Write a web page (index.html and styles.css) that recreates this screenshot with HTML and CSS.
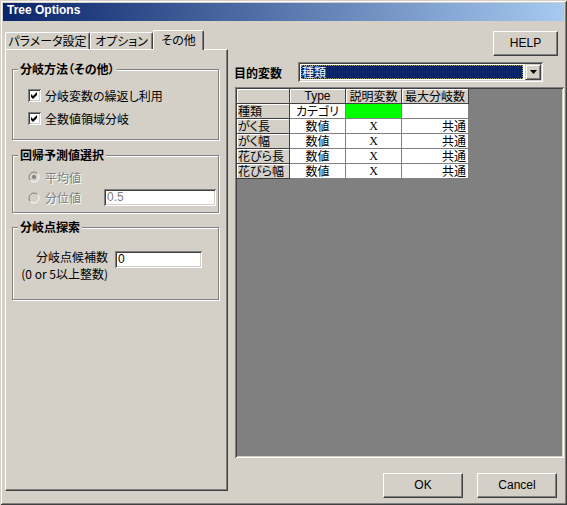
FILE: index.html
```html
<!DOCTYPE html>
<html lang="ja">
<head>
<meta charset="utf-8">
<title>Tree Options</title>
<link rel="stylesheet" href="styles.css">
</head>
<body>
<div class="window">
  <div class="titlebar">Tree Options</div>
  <div class="client">
    <div class="leftcol">
      <div class="tabs">
        <div class="tab t1">パラメータ設定</div>
        <div class="tab t2">オプション</div>
        <div class="tab sel">その他</div>
      </div>
      <div class="panel">
        <div class="group g1">
          <div class="gtitle">分岐方法（その他）</div>
          <div class="check r1">
            <span class="cbox"><svg width="9" height="9" viewBox="0 0 9 9"><path d="M1 3 L3 5 L7 1 L7 4 L3 8 L1 6 Z" fill="#000"/></svg></span>
            <span>分岐変数の繰返し利用</span>
          </div>
          <div class="check r2">
            <span class="cbox"><svg width="9" height="9" viewBox="0 0 9 9"><path d="M1 3 L3 5 L7 1 L7 4 L3 8 L1 6 Z" fill="#000"/></svg></span>
            <span>全数値領域分岐</span>
          </div>
        </div>
        <div class="group g2">
          <div class="gtitle">回帰予測値選択</div>
          <div class="radio r1">
            <svg class="rbtn" width="12" height="12" viewBox="0 0 12 12"><circle cx="6" cy="6" r="5" fill="#d4d0c8"/><path d="M2.46 9.54 A5 5 0 0 1 9.54 2.46" stroke="#808080" fill="none"/><path d="M9.54 2.46 A5 5 0 0 1 2.46 9.54" stroke="#ffffff" fill="none"/><circle cx="6" cy="6" r="2" fill="#808080"/></svg>
            <span class="dis">平均値</span>
          </div>
          <div class="radio r2">
            <svg class="rbtn" width="12" height="12" viewBox="0 0 12 12"><circle cx="6" cy="6" r="5" fill="#d4d0c8"/><path d="M2.46 9.54 A5 5 0 0 1 9.54 2.46" stroke="#808080" fill="none"/><path d="M9.54 2.46 A5 5 0 0 1 2.46 9.54" stroke="#ffffff" fill="none"/></svg>
            <span class="dis rlabel">分位値</span>
            <div class="edit quant">0.5</div>
          </div>
        </div>
        <div class="group g3">
          <div class="gtitle">分岐点探索</div>
          <div class="search">
            <div class="slabel">分岐点候補数<br>(0 or 5以上整数)</div>
            <div class="edit cand">0</div>
          </div>
        </div>
      </div>
    </div>
    <div class="rightcol">
      <div class="helprow"><div class="btn help">HELP</div></div>
      <div class="target">
        <div class="tlabel">目的変数</div>
        <div class="combo">
          <div class="csel"><span class="ctext">種類</span></div>
          <div class="cdrop"><svg width="7" height="4" viewBox="0 0 7 4"><path d="M0 0 H7 L3.5 4 Z" fill="#000"/></svg></div>
        </div>
      </div>
      <div class="gridarea">
        <table class="vars">
          <colgroup><col class="c0"><col class="c1"><col class="c2"><col class="c3"></colgroup>
          <tr><th class="hd"></th><th class="hd lat">Type</th><th class="hd">説明変数</th><th class="hd">最大分岐数</th></tr>
          <tr><th class="rh">種類</th><td class="ctr">カテゴリ</td><td class="green"></td><td></td></tr>
          <tr><th class="rh">がく長</th><td class="ctr">数値</td><td class="ctr x">X</td><td class="rt">共通</td></tr>
          <tr><th class="rh">がく幅</th><td class="ctr">数値</td><td class="ctr x">X</td><td class="rt">共通</td></tr>
          <tr><th class="rh">花びら長</th><td class="ctr">数値</td><td class="ctr x">X</td><td class="rt">共通</td></tr>
          <tr><th class="rh">花びら幅</th><td class="ctr">数値</td><td class="ctr x">X</td><td class="rt">共通</td></tr>
        </table>
      </div>
      <div class="btnrow">
        <div class="btn ok">OK</div>
        <div class="btn cancel">Cancel</div>
      </div>
    </div>
  </div>
</div>
</body>
</html>
```

FILE: styles.css
```css
* { box-sizing: border-box; }
body {
  margin: 0;
  font-family: "Noto Sans CJK JP", sans-serif;
  font-size: 12px;
  font-feature-settings: "palt";
  color: #000;
}
.window {
  width: 567px;
  height: 505px;
  background: #d4d0c8;
  padding: 3px;
  display: flex;
  flex-direction: column;
  box-shadow: inset 1px 1px 0 #d4d0c8, inset -1px -1px 0 #404040, inset 2px 2px 0 #ffffff, inset -2px -2px 0 #808080;
}
.titlebar {
  flex: none;
  height: 18px;
  line-height: 18px;
  padding-left: 4px;
  color: #fff;
  font: bold 12px "Liberation Sans", sans-serif;
  background: linear-gradient(90deg, #0a246a, #a6caf0);
}
.client { display: flex; flex: 1; }
.leftcol { margin: 9px 0 0 2px; width: 223px; flex: none; }
.tabs { display: flex; align-items: flex-end; height: 19px; }
.tab {
  height: 17px;
  line-height: 15px;
  text-align: center;
  border-top: 1px solid #fff;
  border-left: 1px solid #fff;
  border-right: 1px solid #404040;
  border-radius: 2px 2px 0 0;
  box-shadow: inset -1px 0 0 #808080;
  background: #d4d0c8;
}
.t1 { width: 85px; }
.t2 { width: 63px; }
.sel {
  width: 51px;
  height: 20px;
  line-height: 17px;
  margin-bottom: -1px;
  position: relative;
  z-index: 1;
}
.panel {
  height: 442px;
  border: 1px solid;
  border-color: #fff #404040 #404040 #fff;
  box-shadow: inset -1px -1px 0 #808080;
  padding: 19px 0 0 6px;
}
.group {
  width: 207px;
  border: 1px solid #808080;
  box-shadow: 1px 1px 0 #fff, inset 1px 1px 0 #fff;
}
.gtitle {
  width: max-content;
  margin: -8px 0 0 5px;
  padding: 0 2px;
  line-height: 14px;
  height: 14px;
  font-weight: bold;
  background: #d4d0c8;
}
.g1 { height: 71px; }
.g2 { height: 58px; margin-top: 15px; }
.g3 { height: 73px; margin-top: 14px; }
.check { display: flex; align-items: center; height: 16px; gap: 4px; margin-left: 15px; }
.check.r1 { margin-top: 11px; }
.check.r2 { margin-top: 7px; }
.cbox {
  width: 13px;
  height: 13px;
  background: #fff;
  display: flex;
  align-items: center;
  justify-content: center;
  box-shadow: inset 1px 1px 0 #808080, inset -1px -1px 0 #fff, inset 2px 2px 0 #404040, inset -2px -2px 0 #d4d0c8;
}
.radio { display: flex; align-items: center; gap: 5px; margin-left: 15px; }
.radio.r1 { margin-top: 7px; height: 16px; }
.radio.r2 { margin-top: 4px; height: 17px; }
.rbtn { flex: none; }
.dis { color: #808080; text-shadow: 1px 1px 0 #fff; }
.rlabel { width: 54px; }
.edit {
  height: 17px;
  line-height: 13px;
  padding: 2px 3px;
  background: #fff;
  font-family: "Liberation Sans", sans-serif;
  font-size: 12px;
  box-shadow: inset 1px 1px 0 #808080, inset -1px -1px 0 #fff, inset 2px 2px 0 #404040, inset -2px -2px 0 #d4d0c8;
}
.quant { width: 112px; color: #808080; }
.search { display: flex; margin: 14px 0 0 5px; gap: 7px; }
.slabel { width: 90px; text-align: right; line-height: 17px; }
.cand { width: 87px; margin-top: 3px; }
.rightcol { margin-left: 6px; width: 330px; display: flex; flex-direction: column; }
.helprow { display: flex; justify-content: flex-end; margin-top: 10px; padding-right: 6px; }
.btn {
  height: 25px;
  line-height: 23px;
  text-align: center;
  font-family: "Liberation Sans", sans-serif;
  font-size: 12px;
  border: 1px solid;
  border-color: #fff #404040 #404040 #fff;
  box-shadow: inset -1px -1px 0 #808080;
  background: #d4d0c8;
}
.help { width: 65px; }
.target { display: flex; align-items: center; margin-top: 6px; height: 20px; }
.tlabel { width: 64px; font-weight: bold; }
.combo {
  width: 245px;
  height: 20px;
  display: flex;
  padding: 2px;
  background: #fff;
  box-shadow: inset 1px 1px 0 #808080, inset -1px -1px 0 #fff, inset 2px 2px 0 #404040, inset -2px -2px 0 #d4d0c8;
}
.csel {
  flex: 1;
  margin: 1px 2px 1px 1px;
  background: #0a246a;
  color: #fff;
  line-height: 14px;
  outline: 1px dotted #9a9a6a;
  outline-offset: -1px;
  padding-left: 1px;
}
.cdrop {
  width: 16px;
  display: flex;
  align-items: center;
  justify-content: center;
  background: #d4d0c8;
  border: 1px solid;
  border-color: #d4d0c8 #404040 #404040 #d4d0c8;
  box-shadow: inset 1px 1px 0 #fff, inset -1px -1px 0 #808080;
}
.gridarea {
  margin: 5px 0 0 1px;
  width: 329px;
  height: 371px;
  background: #808080;
  box-shadow: inset 1px 1px 0 #808080, inset -1px -1px 0 #fff, inset 2px 2px 0 #404040, inset -2px -2px 0 #d4d0c8;
  padding: 2px;
}
.vars {
  border-collapse: separate;
  border-spacing: 0;
  table-layout: fixed;
  width: 232px;
}
.c0 { width: 53px; }
.c1 { width: 56px; }
.c2 { width: 56px; }
.c3 { width: 67px; }
.vars th, .vars td {
  height: 15px;
  padding: 0;
  line-height: 14px;
  font-size: 12px;
  font-weight: normal;
  white-space: nowrap;
  border-right: 1px solid #404040;
  border-bottom: 1px solid #404040;
}
.vars th {
  background: #d4d0c8;
  box-shadow: inset 1px 1px 0 #fff;
}
.vars th.hd { text-align: center; }
.vars th.rh { text-align: left; padding-left: 1px; }
.vars td { background: #fff; border-color: #808080; }
.lat { font-family: "Liberation Sans", sans-serif; }
.ctr { text-align: center; }
.rt { text-align: right; padding-right: 2px !important; }
.x { font-family: "Liberation Serif", serif; }
.vars td.green { background: #00ff00; }
.btnrow { display: flex; justify-content: flex-end; gap: 14px; margin-top: 15px; padding-right: 7px; }
.ok, .cancel { width: 80px; }
```
